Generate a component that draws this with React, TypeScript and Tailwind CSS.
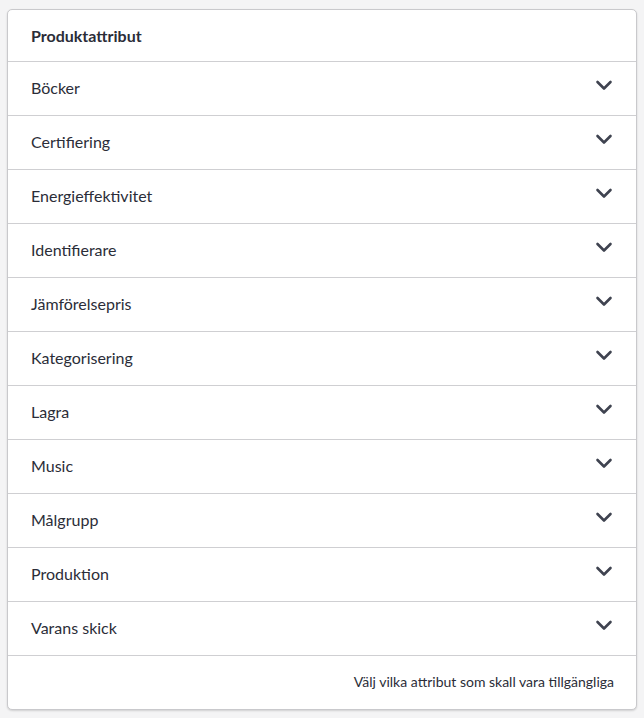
import React from "react";

const items = [
  "Böcker",
  "Certifiering",
  "Energieffektivitet",
  "Identifierare",
  "Jämförelsepris",
  "Kategorisering",
  "Lagra",
  "Music",
  "Målgrupp",
  "Produktion",
  "Varans skick",
];

function Chevron() {
  return (
    <svg width="18" height="11" viewBox="0 0 18 11" fill="none" className="-mt-[4px]">
      <path d="M2.5 2 L9 8.5 L15.5 2" stroke="#3f4350" strokeWidth="2.6" strokeLinecap="round" strokeLinejoin="round" />
    </svg>
  );
}

export default function App() {
  return (
    <div className="min-h-[718px] bg-[#f4f4f5] pt-[9px] pl-[7px] pr-[7px] pb-2" style={{ fontFamily: "Lato, 'Noto Sans', sans-serif" }}>
      <div className="w-[630px] rounded-[5px] border border-[#c9c9cc] bg-white shadow-[0_1px_2px_rgba(0,0,0,0.15)] text-[#2b2d38]">
        <div className="h-[52px] flex items-center pl-[23px] border-b border-[#cfcfd2] text-[16px] font-bold">
          Produktattribut
        </div>
        {items.map((it) => (
          <div key={it} className="h-[54px] flex items-center justify-between pl-[23px] pr-[23px] pb-[2px] border-b border-[#cfcfd2] text-[16px]">
            <span>{it}</span>
            <Chevron />
          </div>
        ))}
        <div className="h-[53px] flex items-center justify-end pr-[22px] pb-[2px] text-[14px]">
          Välj vilka attribut som skall vara tillgängliga
        </div>
      </div>
    </div>
  );
}
